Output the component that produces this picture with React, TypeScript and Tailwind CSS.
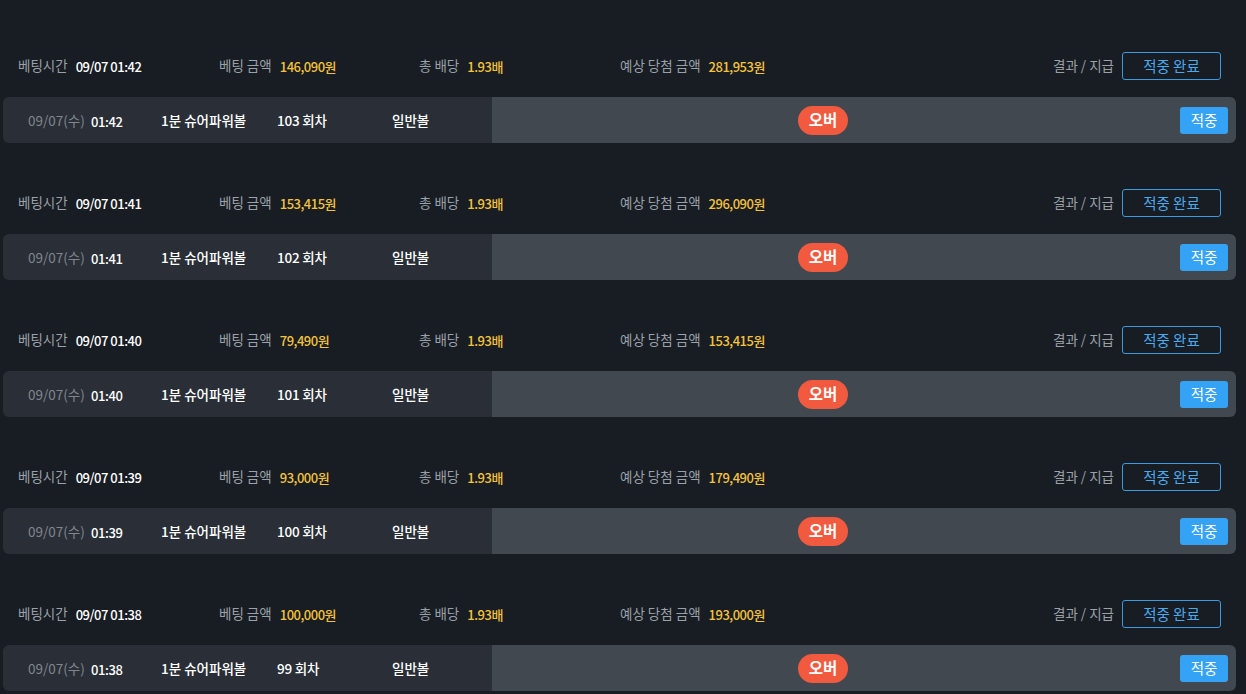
import React from "react";

type Row = {
  time: string;
  amount: string;
  expected: string;
  round: string;
};

const rows: Row[] = [
  { time: "01:42", amount: "146,090원", expected: "281,953원", round: "103 회차" },
  { time: "01:41", amount: "153,415원", expected: "296,090원", round: "102 회차" },
  { time: "01:40", amount: "79,490원", expected: "153,415원", round: "101 회차" },
  { time: "01:39", amount: "93,000원", expected: "179,490원", round: "100 회차" },
  { time: "01:38", amount: "100,000원", expected: "193,000원", round: "99 회차" },
];

const font = {
  fontFamily: '"Noto Sans CJK KR", "Noto Sans", sans-serif',
};

function Block({ r }: { r: Row }) {
  return (
    <div className="mb-[41px]">
      <div className="flex h-[40px] items-center pb-[2px] pl-[18px] pr-[25px] text-[13.5px] leading-none">
        <div className="flex w-[201px] items-center gap-[8px]">
          <span className="text-[#9ba1a8]">베팅시간</span>
          <span className="text-[13px] font-medium tracking-[-0.5px] text-white">09/07 {r.time}</span>
        </div>
        <div className="flex w-[200px] items-center gap-[8px]">
          <span className="text-[#9ba1a8]">베팅 금액</span>
          <span className="text-[13px] font-medium tracking-[-0.5px] text-[#f4c23c]">{r.amount}</span>
        </div>
        <div className="flex w-[201px] items-center gap-[8px]">
          <span className="text-[#9ba1a8]">총 배당</span>
          <span className="text-[13px] font-medium tracking-[-0.5px] text-[#f4c23c]">1.93배</span>
        </div>
        <div className="flex items-center gap-[8px]">
          <span className="text-[#9ba1a8]">예상 당첨 금액</span>
          <span className="text-[13px] font-medium tracking-[-0.5px] text-[#f4c23c]">{r.expected}</span>
        </div>
        <div className="ml-auto flex items-center gap-[8px]">
          <span className="text-[#9ba1a8]">결과 / 지급</span>
          <div className="flex h-[28px] w-[99px] items-center justify-center rounded-[3px] border border-[#3a9be0] text-[14.5px] text-[#4aaaf0]">
            적중 완료
          </div>
        </div>
      </div>
      <div className="mt-[10px] ml-[3px] mr-[10px] flex h-[46px] overflow-hidden rounded-[6px] text-[13.5px] leading-none">
        <div className="flex w-[489px] items-center bg-[#2a2f37] pl-[25px] pt-[2px]">
          <span className="w-[63px] text-[#80868d]">09/07(수)</span>
          <span className="w-[70px] text-[13px] font-medium tracking-[-0.4px] text-white">{r.time}</span>
          <span className="w-[116px] font-medium text-white">1분 슈어파워볼</span>
          <span className="w-[115px] font-medium tracking-[-0.2px] text-white">{r.round}</span>
          <span className="font-medium text-white">일반볼</span>
        </div>
        <div className="flex flex-1 items-center bg-[#424850] pl-[306px] pr-[8px]">
          <div className="flex h-[29px] w-[50px] items-center justify-center rounded-full bg-[#f15a3e] text-[15.5px] font-bold text-white">
            오버
          </div>
          <div className="ml-auto flex h-[27px] w-[48px] items-center justify-center rounded-[3px] bg-[#35a3f5] text-[14.5px] text-white">
            적중
          </div>
        </div>
      </div>
    </div>
  );
}

export default function App() {
  return (
    <div className="min-h-[694px] w-full bg-[#181c23] pt-[47px]" style={font}>
      {rows.map((r) => (
        <Block key={r.time} r={r} />
      ))}
    </div>
  );
}
